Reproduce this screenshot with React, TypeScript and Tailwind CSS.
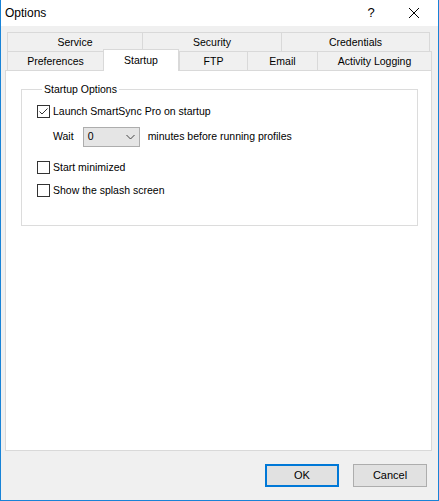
import React from "react";

const ROW1 = [
  { label: "Service", w: "w-[135px]" },
  { label: "Security", w: "w-[139px]" },
  { label: "Credentials", w: "w-[149px]", last: true },
];

const ROW2 = [
  { label: "Preferences", w: "w-[96px]" },
  { label: "Startup", w: "w-[76px]", selected: true },
  { label: "FTP", w: "w-[68px]" },
  { label: "Email", w: "w-[70px]" },
  { label: "Activity Logging", w: "w-[115px]", last: true },
];

function CheckBox({ checked, label }: { checked?: boolean; label: string }) {
  return (
    <div className="flex items-center h-[17px]">
      <div className="w-[13px] h-[13px] border border-[#333333] bg-white flex-shrink-0">
        {checked && (
          <svg width="11" height="11" viewBox="0 0 11 11">
            <path d="M1.5 5.5 L4 8 L9.5 2.5" fill="none" stroke="#333333" strokeWidth="1" />
          </svg>
        )}
      </div>
      <span className="ml-[3px]">{label}</span>
    </div>
  );
}

export default function App() {
  return (
    <div
      className="w-[439px] h-[501px] flex flex-col border-l border-r border-b border-[#1883d7] text-[10.5px] text-black bg-[#f0f0f0]"
      style={{ fontFamily: '"Liberation Sans", Arial, sans-serif' }}
    >
      {/* title bar */}
      <div className="h-[26px] bg-white flex items-center flex-shrink-0">
        <span className="ml-[4px] text-[12px]">Options</span>
        <span className="ml-auto text-[13px] w-[20px] text-center mr-[27px]">?</span>
        <svg width="12" height="12" viewBox="0 0 12 12" className="mr-[18px]">
          <path d="M1 1 L11 11 M11 1 L1 11" stroke="#000" strokeWidth="1" />
        </svg>
      </div>

      <div className="flex-1 flex flex-col pt-[6px] pl-[4px] pr-[6px]">
        {/* tabs */}
        <div className="flex h-[19px] ml-[2px]">
          {ROW1.map(t => (
            <div
              key={t.label}
              className={`${t.w} h-full pt-[2px] border-t border-l border-[#d9d9d9] flex items-center justify-center ${t.last ? "border-r" : ""}`}
            >
              {t.label}
            </div>
          ))}
        </div>
        <div className="flex h-[19px] ml-[2px] items-start">
          {ROW2.map(t =>
            t.selected ? (
              <div
                key={t.label}
                className={`${t.w} h-[22px] -mt-[2px] relative z-10 bg-white border-t border-l border-r border-[#d9d9d9] flex items-center justify-center`}
              >
                {t.label}
              </div>
            ) : (
              <div
                key={t.label}
                className={`${t.w} h-full pt-[2px] border-t border-l border-[#d9d9d9] flex items-center justify-center ${t.last ? "border-r" : ""}`}
              >
                {t.label}
              </div>
            )
          )}
        </div>

        {/* tab page */}
        <div className="h-[381px] bg-white border border-[#d9d9d9] flex flex-col">
          <fieldset className="mt-[12px] ml-[15px] w-[397px] h-[143px] border border-[#dcdcdc] pl-[15px]">
            <legend className="ml-[5px] px-[2px] leading-[13px]">Startup Options</legend>
            <div className="mt-[7px]">
              <CheckBox checked label="Launch SmartSync Pro on startup" />
            </div>
            <div className="mt-[7px] h-[20px] flex items-center pl-[16px]">
              <span>Wait</span>
              <div className="ml-[9px] w-[57px] h-[20px] bg-[#e5e5e5] border border-[#adadad] flex items-center pl-[4px] pr-[4px]">
                <span>0</span>
                <svg width="9" height="6" viewBox="0 0 9 6" className="ml-auto">
                  <path d="M0.5 1 L4.5 5 L8.5 1" fill="none" stroke="#444" strokeWidth="1" />
                </svg>
              </div>
              <span className="ml-[8px]">minutes before running profiles</span>
            </div>
            <div className="mt-[12px]">
              <CheckBox label="Start minimized" />
            </div>
            <div className="mt-[6px]">
              <CheckBox label="Show the splash screen" />
            </div>
          </fieldset>
        </div>

        {/* buttons */}
        <div className="flex justify-end mt-[13px] mr-[5px] gap-[14px]">
          <button className="w-[74px] h-[23px] bg-[#e1e1e1] border-2 border-[#0078d7] text-[11px]">OK</button>
          <button className="w-[74px] h-[23px] bg-[#e1e1e1] border border-[#adadad] text-[11px]">Cancel</button>
        </div>
      </div>
    </div>
  );
}
